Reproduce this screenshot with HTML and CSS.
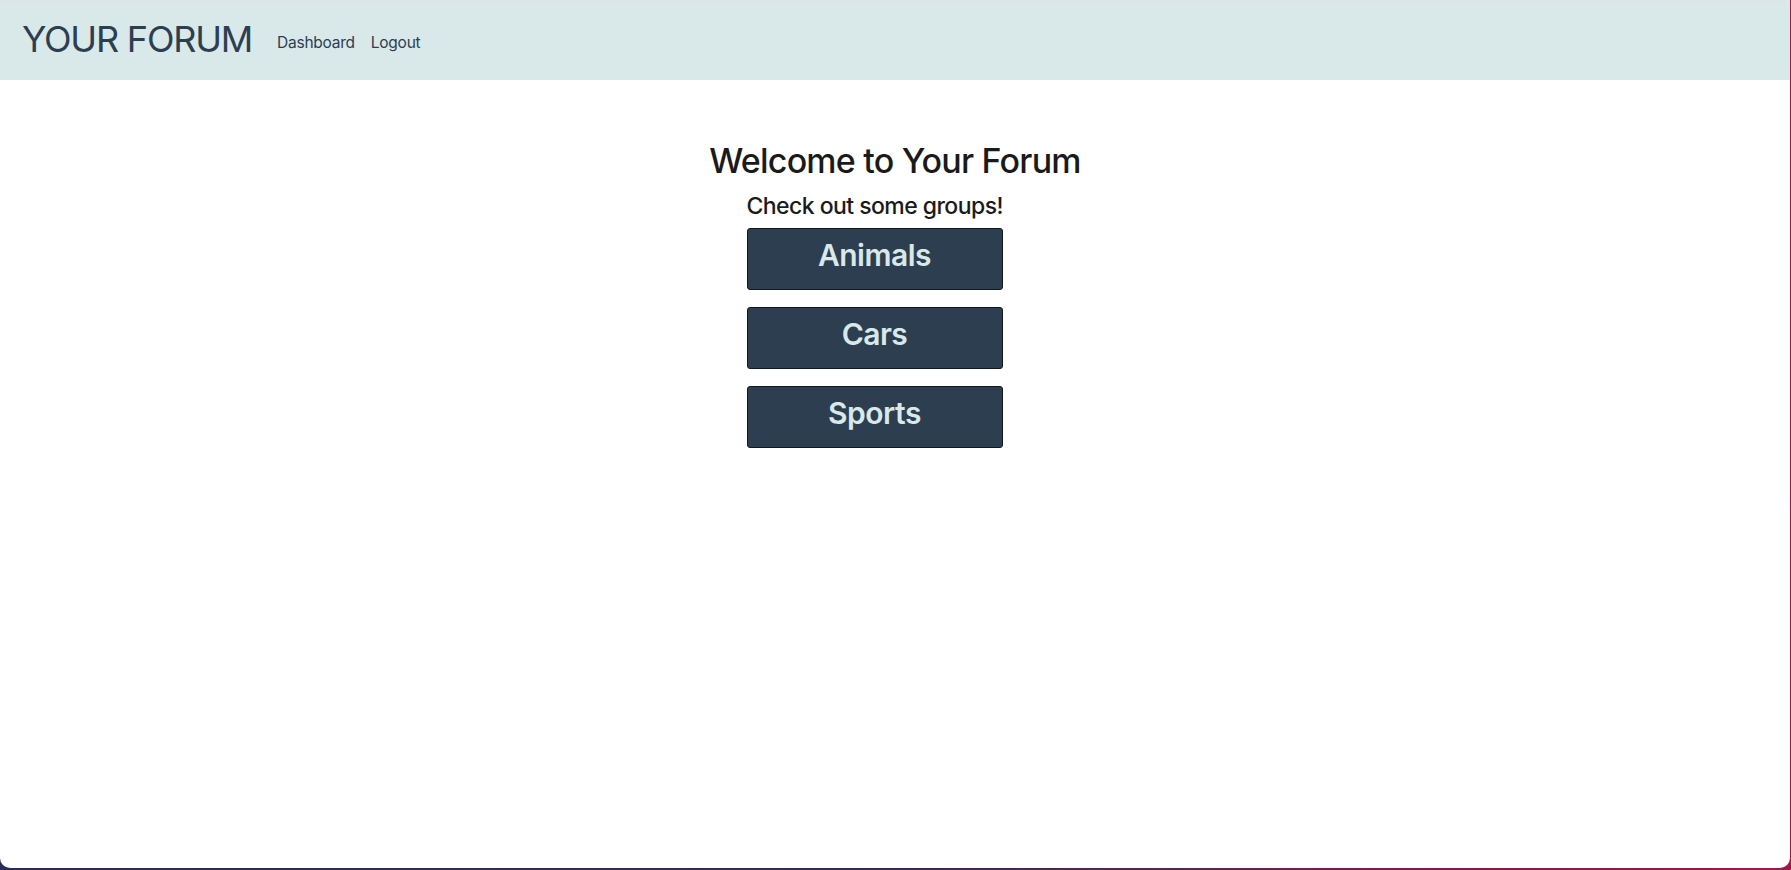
FILE: index.html
```html
<!DOCTYPE html>
<html lang="en">
<head>
<meta charset="utf-8">
<title>Your Forum</title>
<link rel="stylesheet" href="styles.css">
</head>
<body>
<div class="window">
  <nav class="navbar">
    <a class="brand" href="#">YOUR FORUM</a>
    <div class="nav-links">
      <a class="nav-link" href="#">Dashboard</a>
      <a class="nav-link" href="#">Logout</a>
    </div>
  </nav>
  <main class="main">
    <h1 class="title">Welcome to Your Forum</h1>
    <section class="groups">
      <h2 class="groups-title">Check out some groups!</h2>
      <a class="group-btn" href="#">Animals</a>
      <a class="group-btn" href="#">Cars</a>
      <a class="group-btn" href="#">Sports</a>
    </section>
  </main>
</div>
</body>
</html>
```

FILE: styles.css
```css
html {
  margin: 0;
  height: 100%;
  background: linear-gradient(90deg, #2a2d55 0%, #3a2a55 50%, #a0174a 100%);
}
body {
  margin: 0;
  height: 100%;
  font-family: Inter, "Liberation Sans", sans-serif;
  background: transparent;
}
.window {
  width: 1790px;
  height: 868px;
  background: #ffffff;
  border-radius: 0 0 10px 10px;
  border-top: 1px solid #e2e2e2;
  box-sizing: border-box;
  overflow: hidden;
}
.navbar {
  height: 79px;
  background: #d9e8e8;
  display: flex;
  align-items: center;
  padding-left: 22px;
}
.brand {
  color: #2c3e50;
  text-decoration: none;
  font-size: 36px;
  font-weight: 400;
  letter-spacing: -1.2px;
  margin-bottom: 3px;
  margin-right: 25px;
}
.nav-links {
  display: flex;
  gap: 16px;
  padding-top: 3px;
}
.nav-link {
  color: #2c3e50;
  text-decoration: none;
  font-size: 15.5px;
  letter-spacing: -0.25px;
}
.main {
  display: flex;
  flex-direction: column;
  align-items: center;
  padding-top: 61px;
}
.title {
  margin: 0;
  font-size: 34px;
  line-height: 40px;
  font-weight: 500;
  color: #1a1a1a;
  letter-spacing: -0.8px;
}
.groups {
  width: 256px;
  margin-right: 41px;
  display: flex;
  flex-direction: column;
  gap: 17px;
  margin-top: 11px;
}
.groups-title {
  margin: 0 0 -9.5px 0;
  font-size: 23px;
  line-height: 28px;
  font-weight: 500;
  color: #1a1a1a;
  letter-spacing: -0.55px;
  white-space: nowrap;
}
.group-btn {
  height: 62px;
  box-sizing: border-box;
  background: #2c3e50;
  border: 1px solid #111820;
  border-radius: 3px;
  color: #d9e8e8;
  text-decoration: none;
  font-size: 30px;
  font-weight: 600;
  letter-spacing: -0.5px;
  display: flex;
  justify-content: center;
  padding-top: 8px;
}
```
